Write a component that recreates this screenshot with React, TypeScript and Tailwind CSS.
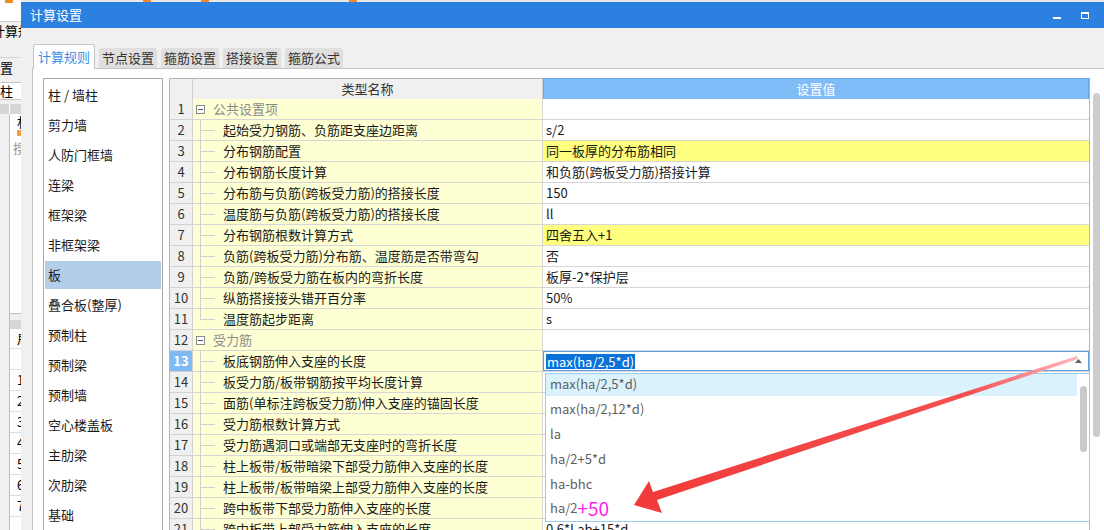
import React from "react";

type Row = {
  n: number;
  name: string;
  value?: string;
  group?: boolean;
  hl?: boolean;
  last?: boolean;
  active?: boolean;
};

const rows: Row[] = [
  { n: 1, name: "公共设置项", group: true },
  { n: 2, name: "起始受力钢筋、负筋距支座边距离", value: "s/2" },
  { n: 3, name: "分布钢筋配置", value: "同一板厚的分布筋相同", hl: true },
  { n: 4, name: "分布钢筋长度计算", value: "和负筋(跨板受力筋)搭接计算" },
  { n: 5, name: "分布筋与负筋(跨板受力筋)的搭接长度", value: "150" },
  { n: 6, name: "温度筋与负筋(跨板受力筋)的搭接长度", value: "ll" },
  { n: 7, name: "分布钢筋根数计算方式", value: "四舍五入+1", hl: true },
  { n: 8, name: "负筋(跨板受力筋)分布筋、温度筋是否带弯勾", value: "否" },
  { n: 9, name: "负筋/跨板受力筋在板内的弯折长度", value: "板厚-2*保护层" },
  { n: 10, name: "纵筋搭接接头错开百分率", value: "50%" },
  { n: 11, name: "温度筋起步距离", value: "s", last: true },
  { n: 12, name: "受力筋", group: true },
  { n: 13, name: "板底钢筋伸入支座的长度", value: "max(ha/2,5*d)", active: true },
  { n: 14, name: "板受力筋/板带钢筋按平均长度计算" },
  { n: 15, name: "面筋(单标注跨板受力筋)伸入支座的锚固长度" },
  { n: 16, name: "受力筋根数计算方式" },
  { n: 17, name: "受力筋遇洞口或端部无支座时的弯折长度" },
  { n: 18, name: "柱上板带/板带暗梁下部受力筋伸入支座的长度" },
  { n: 19, name: "柱上板带/板带暗梁上部受力筋伸入支座的长度" },
  { n: 20, name: "跨中板带下部受力筋伸入支座的长度" },
  { n: 21, name: "跨中板带上部受力筋伸入支座的长度", value: "0.6*Lab+15*d" },
];

const sidebar = [
  "柱 / 墙柱",
  "剪力墙",
  "人防门框墙",
  "连梁",
  "框架梁",
  "非框架梁",
  "板",
  "叠合板(整厚)",
  "预制柱",
  "预制梁",
  "预制墙",
  "空心楼盖板",
  "主肋梁",
  "次肋梁",
  "基础",
];

const tabs = ["计算规则", "节点设置", "箍筋设置", "搭接设置", "箍筋公式"];

const options = ["max(ha/2,5*d)", "max(ha/2,12*d)", "la", "ha/2+5*d", "ha-bhc"];

function BackApp() {
  return (
    <div className="w-[21px] shrink-0 overflow-hidden bg-[#f0f0f0] flex flex-col text-[13px] text-black">
      <div className="h-[22px] shrink-0 bg-white border-b border-[#cfcfcf] relative">
        <span className="absolute left-[5px] top-0 w-[8px] h-[3px] bg-[#f08a24]" />
      </div>
      <div className="h-[18px] shrink-0 -ml-[8px] whitespace-nowrap leading-[18px]">计算规则</div>
      <div className="h-[18px] shrink-0 border-b border-[#d6d6d6]" />
      <div className="h-[20px] shrink-0 -ml-[13px] whitespace-nowrap leading-[20px]">设置</div>
      <div className="h-[4px] shrink-0" />
      <div className="h-[18px] shrink-0 bg-white border-y border-[#c4c4c4] leading-[16px] whitespace-nowrap">
        柱
      </div>
      <div className="h-[4px] shrink-0" />
      <div className="h-[10px] shrink-0 flex">
        <div className="w-[9px] bg-[#d6d6d6]" />
        <div className="flex-1 bg-[#d6d6d6] border-l border-white" />
      </div>
      <div className="flex-1 min-h-0 flex">
        <div className="w-[9px] shrink-0 bg-[#f0f0f0]" />
        <div className="flex-1 flex flex-col border-l border-[#bdbdbd] bg-white">
          <div className="h-[200px] shrink-0 flex flex-col border-b border-[#bdbdbd]">
            <div className="h-[16px] pl-[7px] leading-[16px]">杉</div>
            <div className="h-[10px] pl-[7px]">
              <span className="block w-[4px] h-[6px] bg-[#f0a040]" />
            </div>
            <div className="h-[16px] pl-[3px] text-[#999] leading-[16px]">搜</div>
          </div>
          <div className="h-[6px] shrink-0 bg-[#f0f0f0]" />
          <div className="h-[9px] shrink-0 bg-[#d6d6d6]" />
          <div className="h-[20px] shrink-0 pl-[7px] leading-[20px] border-b border-[#dcdcdc]">局</div>
          <div className="h-[21px] shrink-0 border-b border-[#dcdcdc]" />
          {[1, 2, 3, 4, 5, 6, 7].map((n) => (
            <div key={n} className="h-[21px] shrink-0 pl-[7px] leading-[20px] border-b border-[#dcdcdc]">
              {n}
            </div>
          ))}
        </div>
      </div>
    </div>
  );
}

function NameCell({ row }: { row: Row }) {
  if (row.group) {
    return (
      <div className="flex items-center h-full pl-[3px] gap-[8px] text-[#8c8c8c]">
        <span className="w-[9px] h-[9px] border border-[#8c8c8c] bg-white flex items-center justify-center">
          <span className="w-[5px] h-px bg-[#555]" />
        </span>
        {row.name}
      </div>
    );
  }
  return (
    <div className="relative flex items-center h-full pl-[30px]">
      <span
        className={`absolute left-[7px] top-0 w-px bg-[#cfcfcf] ${row.last ? "h-1/2" : "h-[21px]"}`}
      />
      <span className="absolute left-[7px] top-1/2 w-[15px] h-px bg-[#cfcfcf]" />
      {row.name}
    </div>
  );
}

function ValueCell({ row }: { row: Row }) {
  if (row.active) {
    return (
      <div className="h-full flex items-center border border-[#5d9fe2] pl-[2px] pr-[6px] bg-white">
        <span className="bg-[#0a72d8] text-white leading-[15px] px-px">{row.value}</span>
        <svg className="ml-auto" width="7" height="4" viewBox="0 0 7 4">
          <path d="M0 4 L3.5 0 L7 4 Z" fill="#606060" />
        </svg>
      </div>
    );
  }
  return (
    <div className={`h-full flex items-center pl-[3px] ${row.hl ? "bg-[#ffff80]" : "bg-white"}`}>
      {row.value}
    </div>
  );
}

function Dropdown() {
  return (
    <div className="absolute left-[375px] top-[294px] w-[545px] h-[149px] bg-white border border-[#98cbec] flex">
      <div className="flex-1 flex flex-col">
        {options.map((o, i) => (
          <div
            key={o}
            className={`h-[22px] shrink-0 mb-[3px] pl-[4px] leading-[19px] text-[#5f5f5f] ${
              i === 0 ? "bg-[#d9f2fb]" : ""
            }`}
          >
            {o}
          </div>
        ))}
        <div className="h-[22px] shrink-0 -mt-[2px] pl-[4px] flex items-center text-[#5f5f5f]">
          ha/2
          <span className="text-[#ff22ee] text-[19px] leading-[22px]">+50</span>
        </div>
      </div>
      <div className="w-[12px] pt-[12px] flex justify-center">
        <div className="w-[7px] h-[66px] rounded-full bg-[#c9c9c9]" />
      </div>
    </div>
  );
}

function Table() {
  return (
    <div className="relative w-[921px] shrink-0 border border-[#b4b4b4] bg-white">
      <div className="grid grid-cols-[23px_350px_1fr] h-[20px] border-b border-[#c8c8c8]">
        <div className="bg-[#f0f0f0] border-r border-[#d0d0d0]" />
        <div className="bg-[#f0f0f0] border-r border-[#d0d0d0] flex items-center justify-center text-[#333]">
          类型名称
        </div>
        <div className="bg-[#80bcf8] border border-[#66a6ea] -my-px flex items-center justify-center text-white">
          设置值
        </div>
      </div>
      {rows.map((row) => (
        <div key={row.n} className="grid grid-cols-[23px_350px_1fr] h-[21px]">
          <div
            className={`border-r border-b border-[#d2d2d2] flex items-center justify-center ${
              row.active ? "bg-[#7fbaf5] text-white font-bold" : "bg-[#f0f0f0] text-[#333]"
            }`}
          >
            {row.n}
          </div>
          <div className="bg-[#ffffd4] border-r border-b border-[#d6d6d6]">
            <NameCell row={row} />
          </div>
          <div className="border-b border-[#d6d6d6]">
            <ValueCell row={row} />
          </div>
        </div>
      ))}
      <Dropdown />
    </div>
  );
}

export default function App() {
  return (
    <div className="relative w-[1104px] h-[530px] overflow-hidden flex bg-[#f0f0f0] text-[13px] leading-[20px] text-[#1a1a1a] font-['Noto_Sans_CJK_SC',sans-serif]">
      <BackApp />
      <div className="flex-1 min-h-0 flex flex-col">
        <div className="h-[2px] shrink-0 bg-[#e9e9e9] flex">
          <span className="ml-[122px] w-[8px] bg-[#f08a24]" />
          <span className="ml-[50px] w-[8px] bg-[#f08a24]" />
          <span className="ml-[140px] w-[8px] bg-[#f08a24]" />
        </div>
        <div className="h-[26px] shrink-0 bg-[#2c80e0] flex items-center pl-[9px] text-white">
          <span>计算设置</span>
          <span className="ml-auto w-[8px] h-[2px] bg-white mt-[6px]" />
          <span className="ml-[20px] mr-[15px] w-[8px] h-[7px] border border-white border-t-2" />
        </div>
        <div className="flex-1 min-h-0 flex flex-col pl-[11px] pt-[16px] bg-[#f0f0f0]">
          <div className="h-[24px] shrink-0 flex items-end gap-[4px] pl-[1px]">
            {tabs.map((t, i) =>
              i === 0 ? (
                <div
                  key={t}
                  className="relative z-10 -mb-px w-[62px] h-[25px] bg-white border border-b-0 border-[#c5c5c5] rounded-t-[3px] flex items-center justify-center text-[#3b8fe8]"
                >
                  {t}
                </div>
              ) : (
                <div
                  key={t}
                  className="w-[58px] h-[20px] bg-[#dfdfdf] rounded-t-[3px] flex items-center justify-center text-[#333]"
                >
                  {t}
                </div>
              )
            )}
          </div>
          <div className="flex-1 min-h-0 overflow-hidden flex items-start border-t border-l border-[#c5c5c5] bg-white pt-[9px] pl-[10px]">
            <div className="w-[120px] h-[470px] shrink-0 border border-[#a9a9a9] bg-white pt-[2px] px-px flex flex-col gap-[2px]">
              {sidebar.map((s) => (
                <div
                  key={s}
                  className={`h-[28px] shrink-0 flex items-center pl-[3px] ${s === "板" ? "bg-[#b4cdeb]" : ""}`}
                >
                  {s}
                </div>
              ))}
            </div>
            <div className="w-[6px] shrink-0" />
            <Table />
            <div className="w-[14px] shrink-0 pt-[15px] pl-[3px]">
              <div className="w-[7px] h-[344px] rounded-full bg-[#cdcdcd]" />
            </div>
          </div>
        </div>
      </div>
      <svg className="absolute left-0 top-0 pointer-events-none" width="1104" height="530">
        <defs>
          <linearGradient id="arr" x1="1078" y1="357" x2="640" y2="505" gradientUnits="userSpaceOnUse">
            <stop offset="0" stopColor="#ffb8c0" />
            <stop offset="0.25" stopColor="#f55050" />
            <stop offset="1" stopColor="#f23a3a" />
          </linearGradient>
        </defs>
        <polygon
          points="634,505 649,481 653,492 1077,356 1078,359 657,500 662,513"
          fill="url(#arr)"
        />
      </svg>
    </div>
  );
}
